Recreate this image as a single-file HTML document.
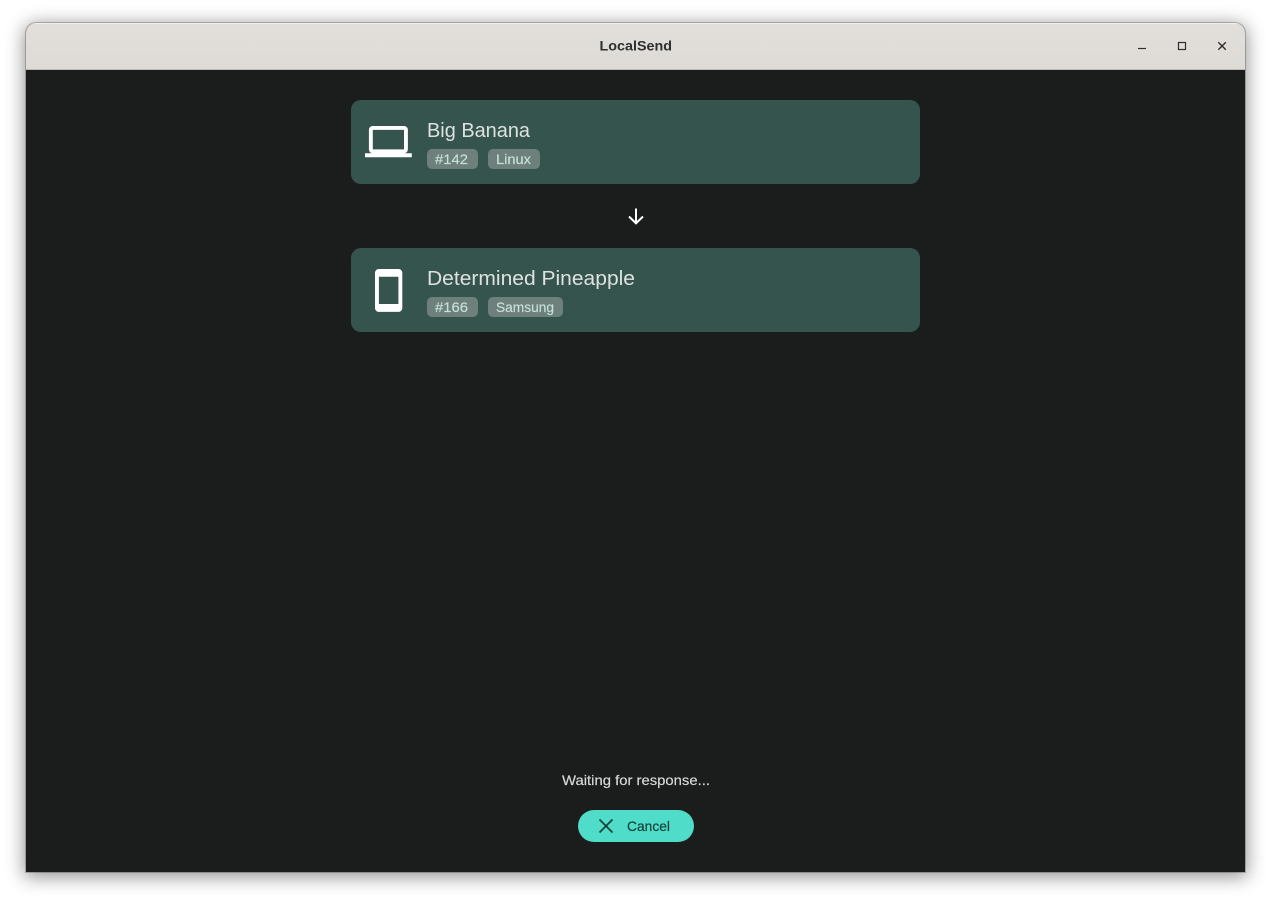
<!DOCTYPE html>
<html>
<head>
<meta charset="utf-8">
<title>LocalSend</title>
<style>
html,body{margin:0;padding:0;width:1271px;height:901px;overflow:hidden;background:#fff;}
#win{position:absolute;left:26px;top:23px;width:1219px;height:849px;background:#1b1d1c;border-radius:10px 10px 0 0;box-shadow:0 0 0 1px rgba(0,0,0,.22),0 3px 18px 2px rgba(0,0,0,.42);overflow:hidden;}
#bar{position:absolute;left:0;top:0;width:1219px;height:46px;background:linear-gradient(#e2dfdb,#dedbd7);box-shadow:inset 0 1px 0 #f1efec;border-bottom:1px solid #bdb9b4;}
.card{position:absolute;left:351px;width:569px;background:#36544e;border-radius:10px;}
.tag{position:absolute;height:20px;background:#6e807c;border-radius:5px;}
svg{position:absolute;left:0;top:0;}
text{font-family:"Liberation Sans","DejaVu Sans",sans-serif;}
.s{stroke-width:.18px;}
</style>
</head>
<body>
<div id="win"><div id="bar"></div></div>
<div class="card" style="top:100px;height:84px"></div>
<div class="card" style="top:248px;height:84px"></div>
<div class="tag" style="left:427px;top:149px;width:51px"></div>
<div class="tag" style="left:488px;top:149px;width:52px"></div>
<div class="tag" style="left:427px;top:297px;width:51px"></div>
<div class="tag" style="left:488px;top:297px;width:75px"></div>
<div style="position:absolute;left:578px;top:810px;width:116px;height:32px;border-radius:16px;background:#4fdcc9"></div>
<svg width="1271" height="901" viewBox="0 0 1271 901">
  <text x="599.5" y="50.5" font-size="14" font-weight="700" fill="#2d2f30" textLength="72.5" lengthAdjust="spacingAndGlyphs">LocalSend</text>
  <path d="M1138 48.5h8" stroke="#2e2e2e" stroke-width="1.2" fill="none"/>
  <rect x="1178.5" y="42.5" width="7" height="7" stroke="#2e2e2e" stroke-width="1.2" fill="none"/>
  <path d="M1218.3 42.3l7.5 7.5M1225.8 42.3l-7.5 7.5" stroke="#2e2e2e" stroke-width="1.4" fill="none"/>

  <g transform="translate(365 118.2) scale(1.95)"><path fill="#fff" d="M20 18c1.1 0 1.99-.9 1.99-2L22 6c0-1.1-.9-2-2-2H4c-1.1 0-2 .9-2 2v10c0 1.1.9 2 2 2H0v2h24v-2h-4zM4 6h16v10H4V6z"/></g>
  <g transform="translate(365.25 267) scale(1.95)"><path fill="#fff" d="M17 1.01L7 1c-1.1 0-2 .9-2 2v18c0 1.1.9 2 2 2h10c1.1 0 2-.9 2-2V3c0-1.1-.9-1.99-2-1.99zM17 19H7V5h10v14z"/></g>

  <text x="427" y="137" font-size="20" fill="#dde2e0" textLength="103" lengthAdjust="spacingAndGlyphs">Big Banana</text>
  <text x="427" y="285" font-size="20" fill="#dde2e0" textLength="208" lengthAdjust="spacingAndGlyphs">Determined Pineapple</text>

  <text class="s" stroke="#c6dfd9" x="435" y="164" font-size="14" fill="#c6dfd9" textLength="33" lengthAdjust="spacingAndGlyphs">#142</text>
  <text class="s" stroke="#c6dfd9" x="496" y="164" font-size="14" fill="#c6dfd9" textLength="35" lengthAdjust="spacingAndGlyphs">Linux</text>
  <text class="s" stroke="#c6dfd9" x="435" y="312" font-size="14" fill="#c6dfd9" textLength="33" lengthAdjust="spacingAndGlyphs">#166</text>
  <text class="s" stroke="#c6dfd9" x="496" y="312" font-size="14" fill="#c6dfd9" textLength="58" lengthAdjust="spacingAndGlyphs">Samsung</text>

  <path d="M636 208.5V223M629 216.5l7 6.8 7-6.8" stroke="#fff" stroke-width="2" fill="none"/>

  <text class="s" stroke="#d6d9d7" x="562" y="785" font-size="14" fill="#d6d9d7" textLength="148" lengthAdjust="spacingAndGlyphs">Waiting for response...</text>
  <path d="M599.5 819.5l13 13M612.5 819.5l-13 13" stroke="#123f38" stroke-width="1.7" fill="none"/>
  <text class="s" stroke="#123f38" x="627" y="831" font-size="14" fill="#123f38" textLength="43" lengthAdjust="spacingAndGlyphs">Cancel</text>
</svg>
</body>
</html>
